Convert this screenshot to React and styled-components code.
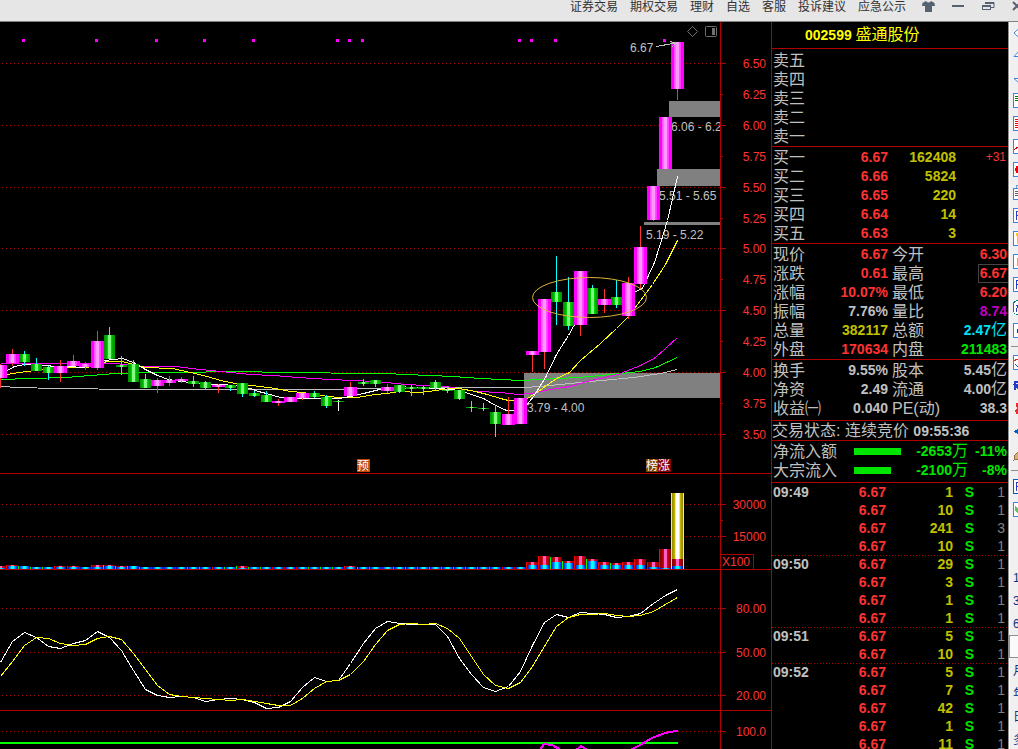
/** @format */

import React from "react";
import styled, { createGlobalStyle, css } from "styled-components";

const up = "#ff3232";
const down = "#00e600";
const volumeColor = "#c0c000";
const label = "#c0c0c0";
const line = "#b00000";

const menuItems = [
	"证券交易",
	"期权交易",
	"理财",
	"自选",
	"客服",
	"投诉建议",
	"应急公示",
];

const asks = ["卖五", "卖四", "卖三", "卖二", "卖一"];

const bids = [
	{ name: "买一", price: "6.67", qty: "162408", diff: "+31" },
	{ name: "买二", price: "6.66", qty: "5824" },
	{ name: "买三", price: "6.65", qty: "220" },
	{ name: "买四", price: "6.64", qty: "14" },
	{ name: "买五", price: "6.63", qty: "3" },
];

// name, value, color, name, value, color, unit
const prices = [
	["现价", "6.67", up, "今开", "6.30", up],
	["涨跌", "0.61", up, "最高", "6.67", up],
	["涨幅", "10.07%", up, "最低", "6.20", up],
	["振幅", "7.76%", label, "量比", "8.74", "#c000c0"],
	["总量", "382117", volumeColor, "总额", "2.47", "#00e0f4", "亿"],
	["外盘", "170634", up, "内盘", "211483", down],
];

const fundamentals = [
	["换手", "9.55%", label, "股本", "5.45", label, "亿"],
	["净资", "2.49", label, "流通", "4.00", label, "亿"],
	["收益㈠", "0.040", label, "PE(动)", "38.3", label],
];

const flows = [
	{ name: "净流入额", bar: 47, value: "-2653", percent: "-11%" },
	{ name: "大宗流入", bar: 37, value: "-2100", percent: "-8%" },
];

// time, quantity, count
const ticks = [
	["09:49", 1, 1],
	["", 10, 1],
	["", 241, 3],
	["", 10, 1],
	["09:50", 29, 1],
	["", 3, 1],
	["", 1, 1],
	["", 1, 1],
	["09:51", 5, 1],
	["", 10, 1],
	["09:52", 5, 1],
	["", 7, 1],
	["", 42, 1],
	["", 1, 1],
	["", 11, 1],
];

// direction, body top, body bottom, high, low
const candles = [
	["u", 365, 378, 364, 388],
	["u", 354, 363, 349, 366],
	["d", 354, 362, 351, 366],
	["d", 364, 371, 358, 371],
	["d", 367, 373, 366, 380],
	["u", 366, 373, 360, 382],
	["u", 361, 366, 355, 366],
	["u", 364, 367, 362, 370],
	["u", 341, 368, 331, 370],
	["d", 335, 359, 327, 359],
	["d", 365, 367, 356, 375],
	["d", 364, 382, 360, 382],
	["d", 379, 388, 374, 388],
	["u", 380, 386, 378, 393],
	["u", 380, 383, 376, 386],
	["u", 379, 381, 377, 383],
	["d", 381, 384, 376, 387],
	["d", 382, 388, 381, 390],
	["u", 385, 387, 384, 393],
	["d", 385, 388, 385, 391],
	["d", 383, 394, 383, 397],
	["d", 393, 396, 391, 397],
	["d", 395, 402, 391, 402],
	["u", 401, 403, 399, 406],
	["u", 397, 402, 397, 402],
	["u", 393, 398, 393, 400],
	["d", 393, 397, 391, 398],
	["d", 397, 406, 395, 408],
	["n", 401, 402, 400, 411],
	["u", 387, 396, 382, 396],
	["d", 382, 384, 379, 386],
	["d", 380, 384, 380, 387],
	["u", 387, 391, 384, 393],
	["d", 385, 392, 385, 393],
	["d", 387, 389, 385, 396],
	["d", 387, 389, 386, 395],
	["d", 382, 388, 380, 390],
	["d", 390, 391, 386, 393],
	["d", 390, 399, 390, 400],
	["d", 407, 408, 401, 412],
	["d", 408, 409, 403, 411],
	["d", 412, 424, 405, 437],
	["u", 414, 425, 397, 425],
	["u", 398, 424, 398, 424],
	["u", 351, 355, 351, 372],
	["u", 299, 352, 299, 369],
	["d", 292, 302, 256, 325],
	["d", 302, 326, 277, 330],
	["u", 271, 325, 271, 336],
	["d", 288, 314, 285, 314],
	["u", 299, 305, 289, 313],
	["d", 297, 305, 280, 308],
	["u", 283, 316, 277, 319],
	["u", 247, 284, 226, 289],
	["u", 186, 220, 186, 221],
	["u", 117, 169, 117, 169],
	["u", 42, 89, 42, 100],
];

// total height and large order height, the rest of the bars are flat
const volumes = {
	0: [3, 1],
	1: [4, 3],
	2: [3, 3],
	5: [3, 2],
	6: [3, 2],
	8: [4, 2],
	9: [4, 3],
	10: [3, 2],
	11: [3, 3],
	20: [3, 1],
	29: [3, 2],
	44: [7, 4],
	45: [13, 4],
	46: [12, 7],
	47: [8, 6],
	48: [13, 4],
	49: [10, 8],
	50: [7, 4],
	51: [6, 4],
	52: [7, 4],
	53: [10, 4],
	54: [7, 2],
	55: [20, 1],
};

const averages = [
	{
		color: "#c0c0c0",
		points:
			"0,386 18,387 55,388 140,389 260,389 330,389 370,388 460,387 525,387 550,385 580,382 633,377 660,373 677,369",
	},
	{
		color: "#00ff00",
		points:
			"0,379 30,378 65,377 90,375 115,373 163,372 250,371 273,372 385,373 405,374 453,376 480,378 500,379 520,380 560,378 590,376 620,373 640,371 655,367 677,357",
	},
	{
		color: "#ff00ff",
		points:
			"0,363 43,363 115,363 140,366 175,366 200,369 220,371 250,374 273,375 297,377 330,379 375,381 405,384 445,386 476,391 500,392 518,394 530,393 545,390 569,386 590,380 605,377 620,373 640,365 655,357 665,348 677,337",
	},
	{
		color: "#ffff00",
		points:
			"0,376 7,374 18,372 35,370 50,368 80,367 97,366 106,361 122,361 133,364 145,367 172,368 190,372 207,376 220,380 240,384 260,386 275,388 290,391 302,392 320,395 338,397 356,397 375,394 387,393 399,391 420,392 435,390 450,388 459,388 475,391 487,394 500,398 508,400 516,400 525,399 535,393 556,378 569,372 580,360 600,343 616,328 628,316 640,300 652,284 665,264 677,240",
	},
	{
		color: "#ffffff",
		points:
			"0,373 7,370 14,366 24,364 35,364 55,366 70,366 80,367 90,366 104,360 122,358 133,362 145,369 157,375 168,379 180,381 200,383 220,384 235,385 250,388 258,391 266,393 280,397 300,398 316,398 338,398 350,396 363,393 375,390 387,387 400,386 423,388 440,388 459,390 471,394 483,398 495,405 506,410 514,410 525,406 533,396 545,377 556,354 568,335 580,313 592,303 604,301 622,300 635,291 642,288 654,262 660,243 667,220 677,176",
	},
];

const fastLine = [
	662, 641, 632, 637, 646, 648, 643, 640, 631, 637, 650, 670, 689, 695, 697,
	696, 697, 701, 699, 698, 699, 702, 708, 707, 701, 687, 677, 681, 680, 663,
	643, 628, 621, 623, 624, 624, 624, 636, 658, 674, 687, 691, 686, 671, 645,
	622, 614, 617, 612, 613, 614, 617, 616, 613, 603, 595, 589,
];

const slowLine = [
	676, 661, 645, 637, 638, 643, 645, 644, 638, 636, 639, 653, 669, 685, 694,
	696, 697, 698, 699, 700, 699, 701, 703, 705, 705, 698, 688, 681, 680, 674,
	661, 644, 630, 624, 623, 624, 623, 628, 638, 656, 674, 685, 688, 682, 666,
	646, 626, 617, 614, 614, 613, 615, 616, 615, 611, 604, 597,
];

const signals = [23, 96, 156, 204, 253, 337, 349, 362, 519, 531, 555, 664];

const gaps = [
	{ x: 669, y: 101, height: 16, text: "6.06 - 6.20", textX: 671, textY: 131 },
	{ x: 657, y: 169, height: 17, text: "5.51 - 5.65", textX: 659, textY: 200 },
	{ x: 644, y: 222, height: 3, text: "5.19 - 5.22", textX: 646, textY: 239 },
	{ x: 524, y: 373, height: 25, text: "3.79 - 4.00", textX: 527, textY: 412 },
];

// one extra pixel for every twelve candles
const candleX = (i) => i * 12 + Math.floor((i + 6) / 12);
const toPoints = (values) =>
	values.map((y, i) => `${candleX(i)},${y}`).join(" ");

const AxisTick = ({ y, text, grid, minor }) => (
	<>
		{grid && (
			<line
				x1='2'
				x2='720'
				y1={y + 0.5}
				y2={y + 0.5}
				stroke={line}
				strokeDasharray='1 3'
			/>
		)}
		{(grid || minor) && (
			<line
				x1='720'
				x2={grid ? 726 : 723}
				y1={y + 0.5}
				y2={y + 0.5}
				stroke={line}
			/>
		)}
		{text && (
			<AxisText x='766' y={y + 5} textAnchor='end'>
				{text}
			</AxisText>
		)}
	</>
);

const Spine = () => (
	<line x1='720.5' x2='720.5' y1='22' y2='749' stroke={line} />
);

const PriceChart = () => {
	const levels = [];
	for (let i = 0; i <= 12; i++) {
		levels.push(3.5 + i * 0.25);
	}

	return (
		<ChartSvg
			width='771'
			height='451'
			viewBox='0 22 771 451'
			shapeRendering='crispEdges'
		>
			<defs>
				<linearGradient id='upBody'>
					<stop offset='0.22' stopColor='#ff00ff' />
					<stop offset='0.22' stopColor='#ff40ff' />
					<stop offset='0.36' stopColor='#ff70ff' />
					<stop offset='0.36' stopColor='#ff99ff' />
					<stop offset='0.64' stopColor='#ff99ff' />
					<stop offset='0.64' stopColor='#ff50ff' />
					<stop offset='0.78' stopColor='#ff30ff' />
					<stop offset='0.78' stopColor='#ff00ff' />
				</linearGradient>
				<linearGradient id='downBody'>
					<stop offset='0' stopColor='#009000' />
					<stop offset='0.2' stopColor='#00a800' />
					<stop offset='0.36' stopColor='#00e000' />
					<stop offset='0.36' stopColor='#80ff80' />
					<stop offset='0.64' stopColor='#80ff80' />
					<stop offset='0.64' stopColor='#00e000' />
					<stop offset='0.8' stopColor='#00a800' />
					<stop offset='1' stopColor='#009000' />
				</linearGradient>
				<clipPath id='plotArea'>
					<rect x='0' y='22' width='720' height='451' />
				</clipPath>
			</defs>

			{levels.map((level, i) => (
				<AxisTick
					key={level}
					y={Math.round(434 - (level - 3.5) * 123.67)}
					text={level.toFixed(2)}
					grid={i % 2 === 0}
					minor
				/>
			))}

			<g clipPath='url(#plotArea)'>
				{gaps.map((gap) => (
					<React.Fragment key={gap.text}>
						<rect
							x={gap.x}
							y={gap.y}
							width={720 - gap.x}
							height={gap.height}
							fill='#808080'
						/>
						<NoteText x={gap.textX} y={gap.textY}>
							{gap.text}
						</NoteText>
					</React.Fragment>
				))}
			</g>

			{averages.map((average) => (
				<polyline
					key={average.color}
					points={average.points}
					transform='translate(0.5 0.5)'
					fill='none'
					stroke={average.color}
				/>
			))}

			{candles.map(([direction, top, bottom, high, low], i) => {
				const x = candleX(i);
				const isUp = direction === "u";
				const wick = { u: up, d: "#00ffff", n: "#ffffff" }[direction];
				return (
					<g key={i}>
						<rect x={x} y={high} width='1' height={low - high} fill={wick} />
						<rect
							x={isUp ? x - 6 : x - 5}
							y={top}
							width={isUp ? 13 : 11}
							height={bottom - top}
							fill={isUp ? "url(#upBody)" : "url(#downBody)"}
						/>
					</g>
				);
			})}

			{signals.map((x) => (
				<rect key={x} x={x - 1} y='39' width='3' height='3' fill='#ff00ff' />
			))}

			<ellipse
				cx='589.5'
				cy='297.500'
				rx='57'
				ry='20'
				fill='none'
				stroke='#dcb43c'
				shapeRendering='auto'
			/>

			<NoteText x='630' y='52'>
				6.67
			</NoteText>
			<path
				d='M656 46.5L676 43M670 41.5l6 1.5-4 4'
				fill='none'
				stroke='#c0c0c0'
			/>
			<g fill='none' stroke='#707070' shapeRendering='auto'>
				<path d='M692.5 26.500l5 5-5 5-5-5z' />
				<rect x='705.5' y='26.500' width='11' height='10' rx='1' />
				<rect x='712' y='28' width='3' height='7' fill='#707070' stroke='none' />
			</g>

			<rect x='357' y='459' width='13' height='13' fill='#c04808' />
			<BadgeText x='357' y='470'>
				预
			</BadgeText>
			<rect x='646' y='459' width='12' height='13' fill='#804000' />
			<BadgeText x='646' y='470'>
				榜
			</BadgeText>
			<rect x='658' y='459' width='13' height='13' fill='#800000' />
			<BadgeText x='658' y='470'>
				涨
			</BadgeText>
			<Spine />
		</ChartSvg>
	);
};

const VolumeChart = () => (
	<ChartSvg
		width='771'
		height='95'
		viewBox='0 474 771 95'
		shapeRendering='crispEdges'
	>
		<defs>
			<linearGradient id='smallOrders'>
				<stop offset='0' stopColor='#800000' />
				<stop offset='0.2' stopColor='#a00000' />
				<stop offset='0.36' stopColor='#e00020' />
				<stop offset='0.36' stopColor='#ff60c0' />
				<stop offset='0.64' stopColor='#ff60c0' />
				<stop offset='0.64' stopColor='#e00020' />
				<stop offset='1' stopColor='#800000' />
			</linearGradient>
			<linearGradient id='largeOrders'>
				<stop offset='0' stopColor='#0000c0' />
				<stop offset='0.2' stopColor='#0060ff' />
				<stop offset='0.36' stopColor='#00c0ff' />
				<stop offset='0.4' stopColor='#00ffff' />
				<stop offset='0.6' stopColor='#00ffff' />
				<stop offset='0.8' stopColor='#0060ff' />
				<stop offset='1' stopColor='#0000c0' />
			</linearGradient>
			<linearGradient id='record'>
				<stop offset='0' stopColor='#909000' />
				<stop offset='0.2' stopColor='#b0a000' />
				<stop offset='0.3' stopColor='#ffe000' />
				<stop offset='0.36' stopColor='#ffffff' />
				<stop offset='0.64' stopColor='#ffffff' />
				<stop offset='0.7' stopColor='#ffe000' />
				<stop offset='0.8' stopColor='#b0a000' />
				<stop offset='1' stopColor='#909000' />
			</linearGradient>
		</defs>

		<AxisTick y={504} text='30000' grid />
		<AxisTick y={520} minor />
		<AxisTick y={536} text='15000' grid />

		{candles.slice(0, 56).map(([direction], i) => {
			const [total, large] = volumes[i] || [2, 2];
			const x = candleX(i);
			return (
				<g key={i}>
					<rect
						x={x - 6}
						y={569 - total}
						width='1'
						height={total}
						fill={direction === "u" ? "#ff0000" : "#00ff00"}
					/>
					<rect
						x={x - 5}
						y={569 - total}
						width='11'
						height={total}
						fill='url(#smallOrders)'
					/>
					<rect
						x={x - 5}
						y={569 - large}
						width='11'
						height={large}
						fill='url(#largeOrders)'
					/>
				</g>
			);
		})}

		<rect x='671' y='493' width='13' height='76' fill='#ffff00' />
		<rect x='672' y='493' width='11' height='76' fill='url(#record)' />
		<rect x='672' y='559' width='11' height='10' fill='url(#smallOrders)' />
		<rect x='672' y='566' width='11' height='3' fill='url(#largeOrders)' />

		<path d='M720 554.500h33.500v15' fill='none' stroke={line} />
		<AxisText x='722' y='566'>
			X100
		</AxisText>
		<Spine />
	</ChartSvg>
);

const OscillatorChart = () => (
	<ChartSvg
		width='771'
		height='140'
		viewBox='0 570 771 140'
		shapeRendering='crispEdges'
	>
		<AxisTick y={608} text='80.00' grid />
		<AxisTick y={652} text='50.00' grid />
		<AxisTick y={695} text='20.00' grid />
		<g fill='none' transform='translate(0.5 0.5)'>
			<polyline points={toPoints(fastLine)} stroke='#ffffff' />
			<polyline points={toPoints(slowLine)} stroke='#ffff00' />
		</g>
		<Spine />
	</ChartSvg>
);

const StrengthChart = () => (
	<ChartSvg
		width='771'
		height='38'
		viewBox='0 711 771 38'
		shapeRendering='crispEdges'
	>
		<AxisTick y={731} text='100.0' grid />
		<rect x='0' y='742' width='678' height='2' fill='#00ff00' />
		<path
			d='M540 750L544 744L552 745L561 750M576 750L581 746L587 750M630 750L640 745L652 738L665 733L678 730.500'
			fill='none'
			stroke='#ff00ff'
			strokeWidth='2'
		/>
		<Spine />
	</ChartSvg>
);

const StockTable = ({ rows, boxed }) => (
	<QuoteTable>
		<colgroup>
			<col width='60' />
			<col width='56' />
			<col width='66' />
			<col />
		</colgroup>
		<tbody>
			{rows.map(([name, value, color, name2, value2, color2, unit]) => (
				<tr key={name}>
					<NameCell scope='row'>{name}</NameCell>
					<NumberCell color={color}>{value}</NumberCell>
					<NameCell scope='row' $second>
						{name2}
					</NameCell>
					<NumberCell color={color2} $edge $boxed={boxed === name2}>
						{value2}
						{unit && <Unit>{unit}</Unit>}
					</NumberCell>
				</tr>
			))}
		</tbody>
	</QuoteTable>
);

const Page = ({ children, color = "#4080e0" }) => (
	<g>
		<rect x='0.5' y='0.5' width='14' height='14' fill='#fff' stroke={color} />
		{children}
	</g>
);

const letterF = <path d='M3.500 12V3.500H10M3.500 7.500H9' stroke='#2040c0' fill='none' />;

const tools = [
	<Page>
		<path d='M2 3.500h11M2 5.500h11M2 7.500h11' stroke='#008000' />
	</Page>,
	<Page>
		<path d='M2 3.500h11M2 5.500h11M2 7.500h11M2 9.500h11M2 11.500h11' stroke='#f00000' />
	</Page>,
	<Page>
		<path d='M1 11l4-3 4 2 5-6' stroke='#d00000' fill='none' />
	</Page>,
	<Page>
		<path d='M2 7.500h4' stroke='#f00000' strokeWidth='3' />
		<path d='M4 4v7' stroke='#f00000' strokeWidth='2' />
	</Page>,
	<g>
		<path d='M3.500 3V0.500h10V4' stroke='#60a0e0' fill='none' />
		<rect x='0.5' y='3.500' width='12' height='11' fill='#fff' stroke='#4080e0' />
		<path d='M2 6.500h8M2 8.500h8M2 10.500h8' stroke='#606060' />
	</g>,
	<Page>{letterF}</Page>,
	<Page>
		<path d='M3 2h9v3H3z' fill='#ffc020' />
		<path d='M5 5v8' stroke='#ffc020' strokeWidth='2' />
	</Page>,
	<Page color='#2090e0'>
		<path d='M4 4h8v8H4z' fill='#ff9060' />
	</Page>,
	<Page>{letterF}</Page>,
	<g>
		<rect x='0.5' y='0.5' width='14' height='14' rx='4' fill='#fff' stroke='#008080' />
		<path d='M3 5.500h6M5.500 3L3 12' stroke='#2040c0' fill='none' />
	</g>,
	<Page>
		<path d='M4 6h4v4H4z' fill='#0040c0' />
	</Page>,
];

const tools2 = [
	<Page>
		<path d='M1 6l3-2 3 3' stroke='#f02020' fill='none' />
		<path d='M2 9l3 3 4-4' stroke='#2040c0' fill='none' />
	</Page>,
	<path d='M2 12V4H6V7H2l5 5' stroke='#2040c0' strokeWidth='2' fill='none' />,
	<path d='M7 1C2 1 2 6 4 7L2 10C3 14 6 14 8 13z' fill='#e03030' />,
	<path d='M1 7.500L7 3v9z' fill='#0060c0' />,
	<path d='M1 13L2 8L8 2L12 6L6 12z' fill='#d8b070' stroke='#907040' />,
];

const tools3 = [
	<Page color='#0060c0'>{letterF}</Page>,
	<Page>
		<path d='M2 4l3 2 5-2v7l-5 1-3-4z' fill='#60c060' />
	</Page>,
];

const periods = ["15", "30", "60", "日", "月", "年", "日", "多"];

const ToolGroup = ({ name, icons }) =>
	icons.map((icon, i) => (
		<ToolButton key={i} aria-label={`${name} ${i + 1}`}>
			<svg width='15' height='15' shapeRendering='crispEdges'>
				{icon}
			</svg>
		</ToolButton>
	));

const App = () => {
	return (
		<AppWrapper>
			<GlobalStyle />
			<TopBar>
				<Menu>
					{menuItems.map((item) => (
						<MenuButton key={item}>{item}</MenuButton>
					))}
				</Menu>
				<WindowButton aria-label='换肤'>
					<svg width='13' height='13'>
						<path
							d='M4 0L0.500 2L0 5H3V11H10V5H13L12.500 2L9 0Q6.500 3 4 0Z'
							fill='#566270'
						/>
					</svg>
				</WindowButton>
				<WindowButton aria-label='最小化'>
					<svg width='13' height='13'>
						<rect y='4' width='12' height='2' fill='#566270' />
					</svg>
				</WindowButton>
				<WindowButton aria-label='还原'>
					<svg width='13' height='13' fill='none' stroke='#566270'>
						<path d='M3.500 3V1.500h8.500v5h-3' />
						<rect x='0.5' y='4.500' width='8' height='4' />
						<path d='M0 5h9M3 2h9' strokeWidth='2' />
					</svg>
				</WindowButton>
				<WindowButton aria-label='关闭' $clipped>
					<svg width='13' height='13'>
						<path
							d='M1 1l8 8M9 1l-8 8'
							stroke='#566270'
							strokeWidth='2'
						/>
					</svg>
				</WindowButton>
			</TopBar>

			<Workspace>
				<Charts>
					<Pane>
						<PriceChart />
					</Pane>
					<Pane>
						<VolumeChart />
					</Pane>
					<Pane>
						<OscillatorChart />
					</Pane>
					<Pane $last>
						<StrengthChart />
					</Pane>
				</Charts>

				<Quote>
					<Title>
						<b>002599</b> <TitleName>盛通股份</TitleName>
					</Title>
					<Section $top={2}>
						<QuoteTable>
							<tbody>
								{asks.map((ask) => (
									<tr key={ask}>
										<NameCell scope='row'>{ask}</NameCell>
									</tr>
								))}
							</tbody>
						</QuoteTable>
					</Section>
					<Section $top={1}>
						<QuoteTable>
							<colgroup>
								<col width='60' />
								<col width='56' />
								<col width='68' />
								<col />
							</colgroup>
							<tbody>
								{bids.map((bid) => (
									<tr key={bid.name}>
										<NameCell scope='row'>{bid.name}</NameCell>
										<NumberCell color={up}>{bid.price}</NumberCell>
										<NumberCell color={volumeColor}>{bid.qty}</NumberCell>
										<DiffCell>{bid.diff}</DiffCell>
									</tr>
								))}
							</tbody>
						</QuoteTable>
					</Section>
					<Section $top={1}>
						<StockTable rows={prices} boxed='最高' />
					</Section>
					<Section $top={1} $bottom={2}>
						<StockTable rows={fundamentals} />
					</Section>
					<Status>
						交易状态: 连续竞价 <b>09:55:36</b>
					</Status>
					<Section $top={1} $bottom={2}>
						<QuoteTable>
							<colgroup>
								<col width='82' />
								<col width='48' />
								<col width='66' />
								<col />
							</colgroup>
							<tbody>
								{flows.map((flow) => (
									<tr key={flow.name}>
										<NameCell scope='row'>{flow.name}</NameCell>
										<td>
											<FlowBar style={{ width: flow.bar }} />
										</td>
										<NumberCell color={down}>
											{flow.value}
											<Unit>万</Unit>
										</NumberCell>
										<NumberCell color={down} $edge>
											{flow.percent}
										</NumberCell>
									</tr>
								))}
							</tbody>
						</QuoteTable>
					</Section>
					<Ticks>
						<QuoteTable>
							<colgroup>
								<col width='60' />
								<col width='54' />
								<col width='67' />
								<col width='21' />
								<col />
							</colgroup>
							<tbody>
								{ticks.map(([time, qty, count], i) => (
									<TickRow key={i} $divided={i > 0 && time}>
										<TimeCell>{time}</TimeCell>
										<NumberCell color={up}>6.67</NumberCell>
										<NumberCell color={volumeColor}>{qty}</NumberCell>
										<NumberCell color={down}>S</NumberCell>
										<CountCell>{count}</CountCell>
									</TickRow>
								))}
							</tbody>
						</QuoteTable>
					</Ticks>
				</Quote>

				<SideBar>
					<ToolButton aria-label='菱形' $height={20}>
						<svg width='15' height='15'>
							<path d='M7 2.500L1 8l6 5.500L13 8z' fill='#fff' stroke='#4080e0' />
						</svg>
					</ToolButton>
					<ToolButton aria-label='上移' $height={24}>
						<svg width='15' height='15'>
							<path d='M1 9.500h12L7 3z' fill='#fff' stroke='#4080e0' />
						</svg>
					</ToolButton>
					<ToolButton aria-label='下移'>
						<svg width='15' height='15'>
							<path d='M1 8.500h12L7 14z' fill='#fff' stroke='#4080e0' />
						</svg>
					</ToolButton>
					<ToolGroup name='工具' icons={tools} />
					<Separator />
					<ToolGroup name='画线' icons={tools2} />
					<Separator />
					<ToolGroup name='面板' icons={tools3} />
					<Spacer />
					{periods.map((period, i) => (
						<ToolButton key={i} $pressed={i === 3}>
							{period}
						</ToolButton>
					))}
				</SideBar>
			</Workspace>
		</AppWrapper>
	);
};

export default App;

const GlobalStyle = createGlobalStyle`
	* {
		box-sizing: border-box;
	}

	body {
		margin: 0;
		background: #000;
		font-family: "Liberation Sans", "Noto Sans CJK SC", sans-serif;
	}

	button {
		border: 0;
		padding: 0;
		background: none;
		font: inherit;
		color: inherit;
	}
`;

const AppWrapper = styled.div`
	display: flex;
	flex-direction: column;
	height: 100vh;
	overflow: hidden;
`;

const TopBar = styled.header`
	display: flex;
	justify-content: flex-end;
	align-items: flex-start;
	gap: 16px;
	height: 22px;
	padding-top: 1px;
	flex-shrink: 0;
	background: #e6e6e6;
	border-bottom: 1px solid #808080;
	color: #333;
	font-size: 12px;
	line-height: 12px;
`;

const Menu = styled.nav`
	display: flex;
	gap: 12px;
`;

const MenuButton = styled.button`
	white-space: nowrap;
`;

const WindowButton = styled.button`
	display: flex;
	flex-shrink: 0;
	width: ${(props) => (props.$clipped ? "6px" : "14px")};
	overflow: hidden;
`;

const Workspace = styled.main`
	display: flex;
	flex: 1;
	min-height: 0;
`;

const Charts = styled.section`
	display: flex;
	flex-direction: column;
	flex: 1;
	min-width: 0;
`;

const Pane = styled.div`
	display: flex;
	justify-content: flex-end;
	overflow: hidden;
	border-bottom: ${(props) => (props.$last ? "0" : `1px solid ${line}`)};
	flex: ${(props) => (props.$last ? "1" : "none")};
`;

const ChartSvg = styled.svg`
	display: block;
	flex-shrink: 0;
`;

const AxisText = styled.text`
	font-size: 12px;
	fill: ${up};
`;

const NoteText = styled.text`
	font-size: 12px;
	fill: #c0c0c0;
`;

const BadgeText = styled.text`
	font-size: 12px;
	fill: #fff;
`;

const Quote = styled.aside`
	display: flex;
	flex-direction: column;
	flex: 0 0 237px;
	border-left: 1px solid ${line};
	color: ${label};
	font-size: 14px;
	line-height: 19px;
`;

const Title = styled.h1`
	flex-shrink: 0;
	height: 27px;
	margin: 0;
	padding-left: 33px;
	border-bottom: 1px solid ${line};
	color: #ffff00;
	font-size: 14px;
	font-weight: normal;
	line-height: 26px;
`;

const TitleName = styled.span`
	font-size: 16px;
	line-height: 16px;
`;

const Section = styled.div`
	flex-shrink: 0;
	padding-top: ${(props) => props.$top || 0}px;
	padding-bottom: ${(props) => props.$bottom || 0}px;
	border-bottom: 1px solid ${line};
`;

const Status = styled.div`
	flex-shrink: 0;
	height: 20px;
	border-bottom: 1px solid ${line};
	font-size: 16px;
	line-height: 19px;
	white-space: nowrap;

	b {
		font-size: 14px;
		line-height: 16px;
	}
`;

const QuoteTable = styled.table`
	width: 100%;
	table-layout: fixed;
	border-collapse: collapse;

	td,
	th {
		height: 19px;
		padding: 0;
		line-height: 17px;
		white-space: nowrap;
	}
`;

const NameCell = styled.th`
	&& {
		padding-left: ${(props) => (props.$second ? "4px" : "1px")};
	}
	font-size: 16px;
	font-weight: normal;
	text-align: left;
`;

const NumberCell = styled.td`
	color: ${(props) => props.color};
	font-weight: bold;
	text-align: right;

	${(props) =>
		props.$edge &&
		css`
			&& {
				padding-right: 1px;
			}
		`}

	${(props) =>
		props.$boxed &&
		css`
			background: linear-gradient(#444, #444) right top / 30px 1px no-repeat,
				linear-gradient(#444, #444) right bottom / 30px 1px no-repeat,
				linear-gradient(#444, #444) right 29px top / 1px 100% no-repeat;
		`}
`;

const Unit = styled.span`
	font-size: 16px;
	font-weight: normal;
	line-height: 16px;
`;

const DiffCell = styled.td`
	&& {
		padding-right: 2px;
	}
	color: ${up};
	font-size: 12px;
	text-align: right;
`;

const FlowBar = styled.div`
	height: 7px;
	background: ${down};
`;

const Ticks = styled.div`
	flex: 1;
	min-height: 0;
	overflow: hidden;

	td {
		height: 18px;
	}
`;

const TickRow = styled.tr`
	background: ${(props) =>
		props.$divided
			? `repeating-linear-gradient(90deg, ${line} 0 1px, transparent 1px 3px) top / 100% 1px no-repeat`
			: "none"};
`;

const TimeCell = styled.td`
	&& {
		padding-left: 1px;
	}
	font-weight: bold;
`;

const CountCell = styled.td`
	&& {
		padding-right: 3px;
	}
	color: #808080;
	text-align: right;
`;

const SideBar = styled.div`
	display: flex;
	flex-direction: column;
	flex: 0 0 10px;
	overflow: hidden;
	background: #f0f0f0;
	border-left: 1px solid #909090;
	box-shadow: inset 1px 0 #fff;
	color: #103080;
	font-size: 12px;
`;

const ToolButton = styled.button`
	display: flex;
	align-items: center;
	flex-shrink: 0;
	width: 24px;
	height: ${(props) => props.$height || 23}px;
	padding-left: 4px;

	${(props) =>
		props.$pressed &&
		css`
			background: #fafafa;
			border: 1px solid #909090;
			color: transparent;
		`}
`;

const Separator = styled.hr`
	flex-shrink: 0;
	width: 100%;
	height: 1px;
	margin: 4px 0 4px 2px;
	border: 0;
	background: #909090;
`;

const Spacer = styled.div`
	flex: 0 0 45px;
`;
